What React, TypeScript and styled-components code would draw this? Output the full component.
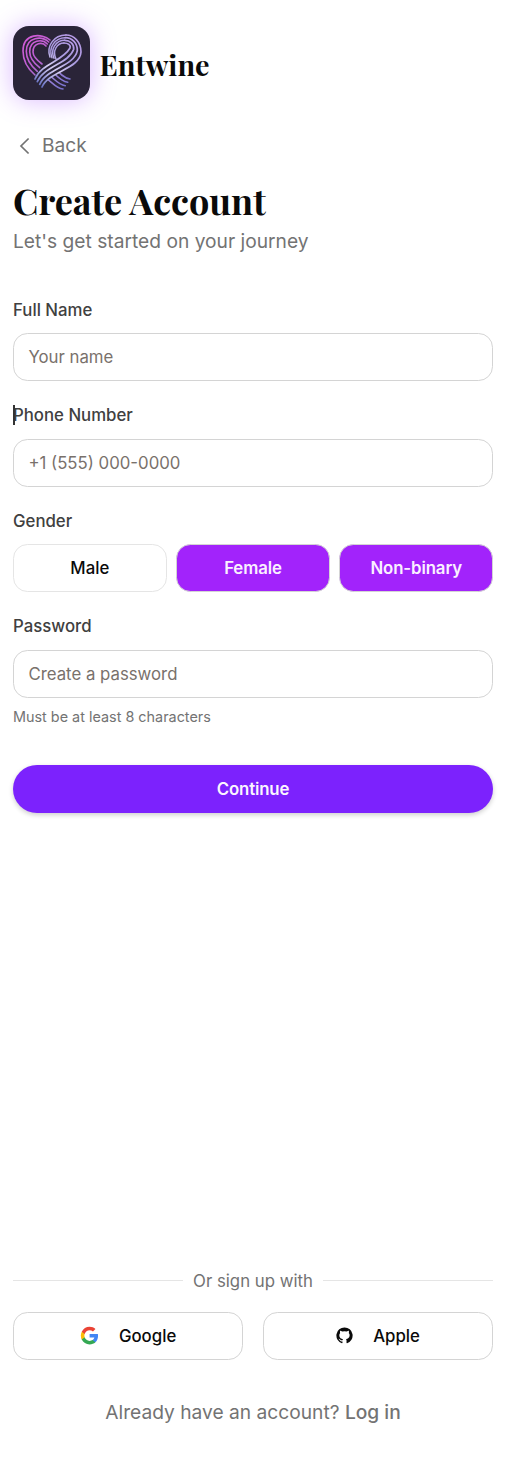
import React from "react";
import styled, { createGlobalStyle, css } from "styled-components";

const Global = createGlobalStyle`
  * { box-sizing: border-box; }
  body { margin: 0; background: #fff; font-family: Inter, sans-serif; color: #0a0a0a; }
  button, input { font: inherit; }
`;

const Page = styled.main`
  min-height: 1459px;
  padding: 26px 12px 33px 13px;
  display: flex;
  flex-direction: column;
`;

const Brand = styled.header`
  display: flex;
  align-items: center;
  gap: 10px;
  height: 74px;
`;

const LogoTile = styled.div`
  width: 77px;
  height: 74px;
  flex: none;
  border-radius: 16px;
  overflow: hidden;
  background: #2a2438;
  box-shadow: 0 0 26px rgba(152, 55, 255, 0.36);
  svg { display: block; }
`;

const serif = css`
  font-family: "Playfair Display", "Liberation Serif", serif;
  font-weight: 700;
`;

const BrandName = styled.span`
  ${serif}
  font-size: 28.8px;
  line-height: 40px;
  padding-top: 2px;
  margin-left: -0.4px;
  white-space: nowrap;
`;

const BackLink = styled.a`
  display: flex;
  align-items: center;
  gap: 5px;
  height: 28px;
  margin-top: 31px;
  color: #737373;
  font-size: 19.2px;
  svg { position: relative; top: 1px; }
`;

const Title = styled.h1`
  ${serif}
  margin: 17px 0 0;
  font-size: 36px;
  line-height: 48px;
  white-space: nowrap;
`;

const Subtitle = styled.p`
  margin: 3px 0 0;
  font-size: 19.2px;
  line-height: 28px;
  color: #737373;
`;

const Form = styled.form`
  display: flex;
  flex-direction: column;
  margin-top: 42.6px;
`;

const Field = styled.div`
  display: flex;
  flex-direction: column;
  gap: 11.4px;
  margin-bottom: 22.2px;
`;

const Label = styled.label<{ $caret?: boolean }>`
  position: relative;
  font-size: 16.8px;
  line-height: 24px;
  font-weight: 500;
  color: #404040;
  ${(p) =>
    p.$caret &&
    css`
      &::before {
        content: "";
        position: absolute;
        left: 0;
        top: 2px;
        width: 2px;
        height: 20px;
        background: #333;
      }
    `}
`;

const Input = styled.input`
  height: 48px;
  width: 100%;
  padding: 0 14.4px;
  border: 1px solid #d4d4d4;
  border-radius: 14.4px;
  background: #fff;
  font-size: 16.8px;
  outline: none;
  &::placeholder { color: #79716b; opacity: 1; }
`;

const Choices = styled.div`
  display: grid;
  grid-template-columns: repeat(3, 1fr);
  gap: 9.6px;
`;

const Choice = styled.button<{ $on?: boolean }>`
  height: 48px;
  padding: 0;
  border-radius: 14.4px;
  border: 1px solid ${(p) => (p.$on ? "#d4d4d4" : "#e5e5e5")};
  background: ${(p) => (p.$on ? "#a223fb" : "#fff")};
  color: ${(p) => (p.$on ? "#faf0ff" : "#0a0a0a")};
  font-size: 16.8px;
  font-weight: ${(p) => (p.$on ? 600 : 500)};
  letter-spacing: ${(p) => (p.$on ? "-0.1px" : "0")};
`;

const Hint = styled.p`
  margin: -2px 0 0;
  font-size: 14.4px;
  line-height: 20px;
  color: #737373;
`;

const Submit = styled.button`
  height: 48px;
  margin-top: 16px;
  border: 0;
  border-radius: 24px;
  background: #7c22fd;
  color: #faf5ff;
  font-size: 16.8px;
  font-weight: 600;
  letter-spacing: -0.15px;
  box-shadow: 0 2px 5px rgba(0, 0, 0, 0.2);
`;

const Footer = styled.footer`
  margin-top: auto;
`;

const Divider = styled.div`
  display: flex;
  align-items: center;
  gap: 10px;
  height: 24px;
  color: #737373;
  font-size: 16.8px;
  &::before, &::after {
    content: "";
    flex: 1;
    height: 1px;
    margin-bottom: 2px;
    background: #e5e5e5;
  }
`;

const Socials = styled.div`
  display: grid;
  grid-template-columns: 1fr 1fr;
  gap: 20px;
  margin-top: 19px;
`;

const Social = styled.button`
  display: flex;
  align-items: center;
  justify-content: center;
  gap: 20px;
  height: 48px;
  padding: 0;
  border: 1px solid #d4d4d4;
  border-radius: 14.4px;
  background: #fff;
  color: #0a0a0a;
  font-size: 16.8px;
  font-weight: 500;
  svg { margin-bottom: 1px; }
`;

const Login = styled.p`
  margin: 38px 0 0;
  text-align: center;
  font-size: 19.2px;
  line-height: 28px;
  color: #737373;
  a { font-weight: 500; }
`;

type Point = [number, number];

/* Blends two curves with the same number of points into evenly spaced strands. */
function strands(outer: Point[], inner: Point[], count: number) {
  return Array.from({ length: count }, (_, i) => {
    const t = i / (count - 1);
    const pts = outer.map(([x, y], k) => {
      const [u, v] = inner[k];
      return `${(x + (u - x) * t).toFixed(1)} ${(y + (v - y) * t).toFixed(1)}`;
    });
    return `M${pts[0]} C${pts.slice(1).join(" ")}`;
  });
}

const leftLobe = strands(
  [[37, 14], [29, 7], [10, 7], [10, 25], [10, 34], [15, 43], [22, 49]],
  [[33, 20], [30, 16], [20, 16], [20, 26], [20, 31], [25, 35], [29, 38]],
  4
);
const tail = strands(
  [[28, 50], [37, 52], [41, 62], [50, 63]],
  [[41, 40], [45, 46], [50, 52], [57, 53]],
  4
);
const hook = strands(
  [[37, 31], [33, 20], [41, 9], [53, 9]],
  [[43, 33], [39, 25], [44, 17], [51, 17]],
  4
);
const diagonal = strands(
  [[53, 9], [61, 9], [68, 16], [68, 26], [67, 43], [36, 45], [29, 61]],
  [[51, 17], [55, 17], [58, 19], [57, 22], [50, 35], [28, 38], [22, 53]],
  4
);

function HeartLogo() {
  return (
    <LogoTile>
      <svg width="77" height="74" viewBox="0 0 77 74" fill="none" strokeLinecap="round">
        <defs>
          <linearGradient id="pink" x1="10" y1="10" x2="60" y2="62" gradientUnits="userSpaceOnUse">
            <stop stopColor="#d65ad8" />
            <stop offset=".4" stopColor="#b760cf" />
            <stop offset=".65" stopColor="#9d80d8" />
            <stop offset="1" stopColor="#6a6cc8" />
          </linearGradient>
          <linearGradient id="silver" x1="58" y1="10" x2="25" y2="62" gradientUnits="userSpaceOnUse">
            <stop stopColor="#b79be6" />
            <stop offset=".35" stopColor="#a99be0" />
            <stop offset=".6" stopColor="#d6cdf2" />
            <stop offset="1" stopColor="#5663bb" />
          </linearGradient>
        </defs>
        <g stroke="url(#pink)" strokeWidth="1.6">
          {[...leftLobe, ...tail].map((d) => (
            <path key={d} d={d} />
          ))}
        </g>
        <g stroke="url(#silver)" strokeWidth="1.5">
          {hook.map((d) => (
            <path key={d} d={d} />
          ))}
        </g>
        <path d="M60 28 C54 39 32 42 25.5 57" stroke="#2a2438" strokeWidth="12" strokeLinecap="butt" />
        <g stroke="url(#silver)" strokeWidth="1.7">
          {diagonal.map((d) => (
            <path key={d} d={d} />
          ))}
        </g>
      </svg>
    </LogoTile>
  );
}

function BackIcon() {
  return (
    <svg width="24" height="24" viewBox="0 0 24 24" fill="none" stroke="currentColor" strokeWidth="1.7">
      <path d="M15.6 4.5 L8 12 L15.6 19.5" />
    </svg>
  );
}

function GoogleMark() {
  return (
    <svg width="19.2" height="19.2" viewBox="0 0 24 24">
      <path fill="#4285F4" d="M22.56 12.25c0-.78-.07-1.53-.2-2.25H12v4.26h5.92c-.26 1.37-1.04 2.53-2.21 3.31v2.77h3.57c2.08-1.92 3.28-4.74 3.28-8.09z" />
      <path fill="#34A853" d="M12 23c2.97 0 5.46-.98 7.28-2.66l-3.57-2.77c-.98.66-2.23 1.06-3.71 1.06-2.86 0-5.29-1.93-6.16-4.53H2.18v2.84C3.99 20.53 7.7 23 12 23z" />
      <path fill="#FBBC05" d="M5.84 14.09c-.22-.66-.35-1.36-.35-2.09s.13-1.43.35-2.09V7.07H2.18C1.43 8.55 1 10.22 1 12s.43 3.45 1.18 4.93l3.66-2.84z" />
      <path fill="#EA4335" d="M12 5.38c1.62 0 3.06.56 4.21 1.64l3.15-3.15C17.45 2.09 14.97 1 12 1 7.7 1 3.99 3.47 2.18 7.07l3.66 2.84c.87-2.6 3.3-4.53 6.16-4.53z" />
    </svg>
  );
}

function GithubMark() {
  return (
    <svg width="17" height="17" viewBox="-0.6 -0.3 25.2 25.2" fill="#0a0a0a">
      <path d="M12 .3a12 12 0 0 0-3.8 23.4c.6.1.8-.3.8-.6v-2c-3.3.7-4-1.6-4-1.6-.6-1.4-1.4-1.8-1.4-1.8-1-.7.1-.7.1-.7 1.2 0 1.9 1.2 1.9 1.2 1 1.8 2.8 1.3 3.5 1 0-.8.4-1.3.7-1.6-2.7-.3-5.5-1.3-5.5-6 0-1.2.5-2.3 1.3-3.1-.2-.4-.6-1.6 0-3.2 0 0 1-.3 3.4 1.2a11.5 11.5 0 0 1 6 0c2.3-1.5 3.3-1.2 3.3-1.2.6 1.6.2 2.8 0 3.2.9.8 1.3 1.9 1.3 3.2 0 4.6-2.8 5.6-5.5 5.9.5.4.9 1 .9 2.2v3.3c0 .3.1.7.8.6A12 12 0 0 0 12 .3" />
    </svg>
  );
}

export default function App() {
  return (
    <>
      <Global />
      <Page>
        <Brand>
          <HeartLogo />
          <BrandName>Entwine</BrandName>
        </Brand>
        <BackLink>
          <BackIcon />
          Back
        </BackLink>
        <Title>Create Account</Title>
        <Subtitle>Let's get started on your journey</Subtitle>
        <Form>
          <Field>
            <Label>Full Name</Label>
            <Input placeholder="Your name" />
          </Field>
          <Field>
            <Label $caret>Phone Number</Label>
            <Input placeholder="+1 (555) 000-0000" />
          </Field>
          <Field>
            <Label>Gender</Label>
            <Choices>
              <Choice type="button">Male</Choice>
              <Choice type="button" $on>Female</Choice>
              <Choice type="button" $on>Non-binary</Choice>
            </Choices>
          </Field>
          <Field>
            <Label>Password</Label>
            <Input placeholder="Create a password" />
            <Hint>Must be at least 8 characters</Hint>
          </Field>
          <Submit type="button">Continue</Submit>
        </Form>
        <Footer>
          <Divider>Or sign up with</Divider>
          <Socials>
            <Social>
              <GoogleMark />
              Google
            </Social>
            <Social>
              <GithubMark />
              Apple
            </Social>
          </Socials>
          <Login>
            Already have an account? <a>Log in</a>
          </Login>
        </Footer>
      </Page>
    </>
  );
}
